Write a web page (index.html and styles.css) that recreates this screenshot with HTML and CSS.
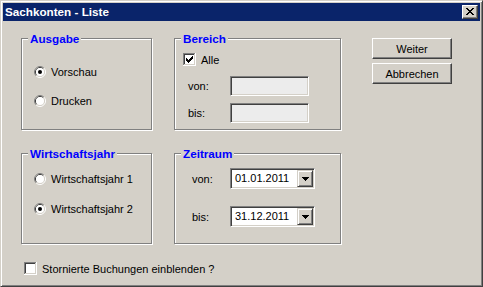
FILE: index.html
```html
<!DOCTYPE html>
<html lang="de">
<head>
<meta charset="utf-8">
<title>Sachkonten - Liste</title>
<link rel="stylesheet" href="styles.css">
</head>
<body>
<div class="window">
  <div class="titlebar">
    <span class="title">Sachkonten - Liste</span>
    <div class="close">
      <svg class="close-x" width="8" height="7" viewBox="0 0 8 7" shape-rendering="crispEdges">
        <rect x="0" y="0" width="2" height="1" fill="#000"/><rect x="6" y="0" width="2" height="1" fill="#000"/>
        <rect x="1" y="1" width="2" height="1" fill="#000"/><rect x="5" y="1" width="2" height="1" fill="#000"/>
        <rect x="2" y="2" width="4" height="1" fill="#000"/>
        <rect x="3" y="3" width="2" height="1" fill="#000"/>
        <rect x="2" y="4" width="4" height="1" fill="#000"/>
        <rect x="1" y="5" width="2" height="1" fill="#000"/><rect x="5" y="5" width="2" height="1" fill="#000"/>
        <rect x="0" y="6" width="2" height="1" fill="#000"/><rect x="6" y="6" width="2" height="1" fill="#000"/>
      </svg>
    </div>
  </div>
  <div class="client">
    <div class="main">
      <div class="groups">
        <div class="group group-ausgabe">
          <span class="legend">Ausgabe</span>
          <div class="radio-list gap-17">
            <div class="option">
              <svg class="radio" width="12" height="12" viewBox="0 0 12 12">
                <path d="M2.11 9.89A5.5 5.5 0 0 1 9.89 2.11" fill="none" stroke="#808080"/>
                <path d="M9.89 2.11A5.5 5.5 0 0 1 2.11 9.89" fill="none" stroke="#ffffff"/>
                <path d="M2.82 9.18A4.5 4.5 0 0 1 9.18 2.82" fill="none" stroke="#404040"/>
                <path d="M9.18 2.82A4.5 4.5 0 0 1 2.82 9.18" fill="none" stroke="#d4d0c8"/>
                <circle cx="6" cy="6" r="4" fill="#fff"/>
                <circle cx="6" cy="6" r="2" fill="#000"/>
              </svg>
              <span>Vorschau</span>
            </div>
            <div class="option">
              <svg class="radio" width="12" height="12" viewBox="0 0 12 12">
                <path d="M2.11 9.89A5.5 5.5 0 0 1 9.89 2.11" fill="none" stroke="#808080"/>
                <path d="M9.89 2.11A5.5 5.5 0 0 1 2.11 9.89" fill="none" stroke="#ffffff"/>
                <path d="M2.82 9.18A4.5 4.5 0 0 1 9.18 2.82" fill="none" stroke="#404040"/>
                <path d="M9.18 2.82A4.5 4.5 0 0 1 2.82 9.18" fill="none" stroke="#d4d0c8"/>
                <circle cx="6" cy="6" r="4" fill="#fff"/>
              </svg>
              <span>Drucken</span>
            </div>
          </div>
        </div>

        <div class="group group-bereich">
          <span class="legend">Bereich</span>
          <div class="check-row">
            <svg class="checkbox" width="13" height="13" viewBox="0 0 13 13" shape-rendering="crispEdges">
              <rect x="0" y="0" width="13" height="13" fill="#fff"/>
              <rect x="0" y="0" width="12" height="1" fill="#808080"/><rect x="0" y="0" width="1" height="12" fill="#808080"/>
              <rect x="0" y="12" width="13" height="1" fill="#fff"/><rect x="12" y="0" width="1" height="13" fill="#fff"/>
              <rect x="1" y="1" width="10" height="1" fill="#404040"/><rect x="1" y="1" width="1" height="10" fill="#404040"/>
              <rect x="1" y="11" width="11" height="1" fill="#d4d0c8"/><rect x="11" y="1" width="1" height="11" fill="#d4d0c8"/>
              <rect x="9" y="3" width="1" height="1" fill="#000"/>
              <rect x="8" y="4" width="2" height="1" fill="#000"/>
              <rect x="3" y="5" width="1" height="1" fill="#000"/><rect x="7" y="5" width="3" height="1" fill="#000"/>
              <rect x="3" y="6" width="2" height="1" fill="#000"/><rect x="6" y="6" width="3" height="1" fill="#000"/>
              <rect x="3" y="7" width="5" height="1" fill="#000"/>
              <rect x="4" y="8" width="3" height="1" fill="#000"/>
              <rect x="5" y="9" width="1" height="1" fill="#000"/>
            </svg>
            <span>Alle</span>
          </div>
          <div class="field-row first">
            <span class="lbl">von:</span>
            <div class="textbox"></div>
          </div>
          <div class="field-row second">
            <span class="lbl">bis:</span>
            <div class="textbox"></div>
          </div>
        </div>

        <div class="group group-wj">
          <span class="legend">Wirtschaftsjahr</span>
          <div class="radio-list gap-18">
            <div class="option">
              <svg class="radio" width="12" height="12" viewBox="0 0 12 12">
                <path d="M2.11 9.89A5.5 5.5 0 0 1 9.89 2.11" fill="none" stroke="#808080"/>
                <path d="M9.89 2.11A5.5 5.5 0 0 1 2.11 9.89" fill="none" stroke="#ffffff"/>
                <path d="M2.82 9.18A4.5 4.5 0 0 1 9.18 2.82" fill="none" stroke="#404040"/>
                <path d="M9.18 2.82A4.5 4.5 0 0 1 2.82 9.18" fill="none" stroke="#d4d0c8"/>
                <circle cx="6" cy="6" r="4" fill="#fff"/>
              </svg>
              <span>Wirtschaftsjahr 1</span>
            </div>
            <div class="option">
              <svg class="radio" width="12" height="12" viewBox="0 0 12 12">
                <path d="M2.11 9.89A5.5 5.5 0 0 1 9.89 2.11" fill="none" stroke="#808080"/>
                <path d="M9.89 2.11A5.5 5.5 0 0 1 2.11 9.89" fill="none" stroke="#ffffff"/>
                <path d="M2.82 9.18A4.5 4.5 0 0 1 9.18 2.82" fill="none" stroke="#404040"/>
                <path d="M9.18 2.82A4.5 4.5 0 0 1 2.82 9.18" fill="none" stroke="#d4d0c8"/>
                <circle cx="6" cy="6" r="4" fill="#fff"/>
                <circle cx="6" cy="6" r="2" fill="#000"/>
              </svg>
              <span>Wirtschaftsjahr 2</span>
            </div>
          </div>
        </div>

        <div class="group group-zeitraum">
          <span class="legend">Zeitraum</span>
          <div class="field-row">
            <span class="lbl">von:</span>
            <div class="combo">
              <span class="combo-text">01.01.2011</span>
              <div class="combo-btn">
                <svg width="7" height="4" viewBox="0 0 7 4" shape-rendering="crispEdges"><path d="M0 0H7V1H6V2H5V3H4V4H3V3H2V2H1V1H0Z" fill="#000"/></svg>
              </div>
            </div>
          </div>
          <div class="field-row second">
            <span class="lbl">bis:</span>
            <div class="combo">
              <span class="combo-text">31.12.2011</span>
              <div class="combo-btn">
                <svg width="7" height="4" viewBox="0 0 7 4" shape-rendering="crispEdges"><path d="M0 0H7V1H6V2H5V3H4V4H3V3H2V2H1V1H0Z" fill="#000"/></svg>
              </div>
            </div>
          </div>
        </div>
      </div>

      <div class="buttons">
        <div class="btn">Weiter</div>
        <div class="btn">Abbrechen</div>
      </div>
    </div>

    <div class="footer">
      <svg class="checkbox" width="13" height="13" viewBox="0 0 13 13" shape-rendering="crispEdges">
        <rect x="0" y="0" width="13" height="13" fill="#fff"/>
        <rect x="0" y="0" width="12" height="1" fill="#808080"/><rect x="0" y="0" width="1" height="12" fill="#808080"/>
        <rect x="0" y="12" width="13" height="1" fill="#fff"/><rect x="12" y="0" width="1" height="13" fill="#fff"/>
        <rect x="1" y="1" width="10" height="1" fill="#404040"/><rect x="1" y="1" width="1" height="10" fill="#404040"/>
        <rect x="1" y="11" width="11" height="1" fill="#d4d0c8"/><rect x="11" y="1" width="1" height="11" fill="#d4d0c8"/>
      </svg>
      <span>Stornierte Buchungen einblenden ?</span>
    </div>
  </div>
</div>
</body>
</html>
```

FILE: styles.css
```css
* {
  box-sizing: border-box;
  margin: 0;
  padding: 0;
}

html, body {
  width: 483px;
  height: 287px;
  overflow: hidden;
  background: #d4d0c8;
}

body {
  font-family: "Liberation Sans", Arial, sans-serif;
  font-size: 11px;
  color: #000;
}

.window {
  width: 483px;
  height: 287px;
  border: 1px solid;
  border-color: #d4d0c8 #404040 #404040 #d4d0c8;
  box-shadow: inset 1px 1px 0 #fff, inset -1px -1px 0 #808080;
  padding: 2px;
  background: #d4d0c8;
  display: flex;
  flex-direction: column;
}

.titlebar {
  height: 18px;
  flex: none;
  background: #0a246a;
  display: flex;
  align-items: center;
  justify-content: space-between;
  padding: 0 2px;
}

.title {
  color: #fff;
  font-weight: bold;
  font-size: 11.7px;
  line-height: 18px;
  white-space: nowrap;
}

.close {
  width: 16px;
  height: 14px;
  background: #d4d0c8;
  border: 1px solid;
  border-color: #fff #404040 #404040 #fff;
  box-shadow: inset -1px -1px 0 #808080;
  padding: 2px 0 0 3px;
}

.close-x {
  display: block;
}

.client {
  flex: 1;
  padding: 17px 0 0 18px;
}

.main {
  display: flex;
  align-items: flex-start;
}

.groups {
  display: grid;
  grid-template-columns: 131px 167px;
  grid-template-rows: 92px 91px;
  column-gap: 22px;
  row-gap: 23px;
}

.group {
  position: relative;
  border: 1px solid #808080;
  box-shadow: 1px 1px 0 #fff, inset 1px 1px 0 #fff;
}

.legend {
  position: absolute;
  top: -7px;
  left: 6px;
  padding: 0 2px;
  background: #d4d0c8;
  color: #0000ff;
  font-weight: bold;
  font-size: 11.7px;
  line-height: 14px;
  white-space: nowrap;
}

.group-ausgabe {
  padding: 27px 0 0 12px;
}

.group-wj {
  padding: 19px 0 0 12px;
}

.radio-list {
  display: flex;
  flex-direction: column;
}

.gap-17 {
  gap: 17px;
}

.gap-18 {
  gap: 18px;
}

.option {
  display: flex;
  align-items: center;
  gap: 5px;
  height: 12px;
  white-space: nowrap;
}

.radio, .checkbox {
  display: block;
  flex: none;
}

.group-bereich {
  padding: 14px 0 0 8px;
}

.check-row {
  display: flex;
  align-items: center;
  gap: 5px;
  height: 13px;
}

.field-row {
  display: flex;
  align-items: center;
}

.group-bereich .field-row {
  padding-left: 5px;
}

.group-bereich .field-row.first {
  margin-top: 10px;
}

.group-bereich .field-row.second {
  margin-top: 7px;
}

.group-bereich .lbl {
  width: 42px;
}

.textbox {
  width: 79px;
  height: 20px;
  border: 1px solid;
  border-color: #808080 #fff #fff #808080;
  box-shadow: inset 1px 1px 0 #404040, inset -1px -1px 0 #d4d0c8;
  background: #ececec;
}

.group-zeitraum {
  padding: 14px 0 0 9px;
}

.group-zeitraum .lbl {
  width: 38px;
  margin-left: 8px;
}

.group-zeitraum .field-row.second {
  margin-top: 17px;
}

.combo {
  width: 85px;
  height: 21px;
  border: 1px solid;
  border-color: #808080 #fff #fff #808080;
  box-shadow: inset 1px 1px 0 #404040, inset -1px -1px 0 #d4d0c8;
  background: #fff;
  padding: 1px;
  display: flex;
}

.combo-text {
  flex: 1;
  padding-left: 3px;
  line-height: 17px;
  font-size: 11px;
}

.combo-btn {
  width: 16px;
  height: 17px;
  background: #d4d0c8;
  border: 1px solid;
  border-color: #d4d0c8 #404040 #404040 #d4d0c8;
  box-shadow: inset 1px 1px 0 #fff, inset -1px -1px 0 #808080;
  display: flex;
  align-items: center;
  justify-content: center;
}

.combo-btn svg {
  display: block;
}

.buttons {
  margin-left: 31px;
  display: flex;
  flex-direction: column;
  gap: 4px;
}

.btn {
  width: 80px;
  height: 21px;
  border: 1px solid;
  border-color: #fff #404040 #404040 #fff;
  box-shadow: inset -1px -1px 0 #808080;
  background: #d4d0c8;
  display: flex;
  align-items: center;
  justify-content: center;
  font-size: 11px;
}

.footer {
  margin-top: 18px;
  padding-left: 3px;
  display: flex;
  align-items: center;
  gap: 5px;
  height: 13px;
  white-space: nowrap;
}
```
